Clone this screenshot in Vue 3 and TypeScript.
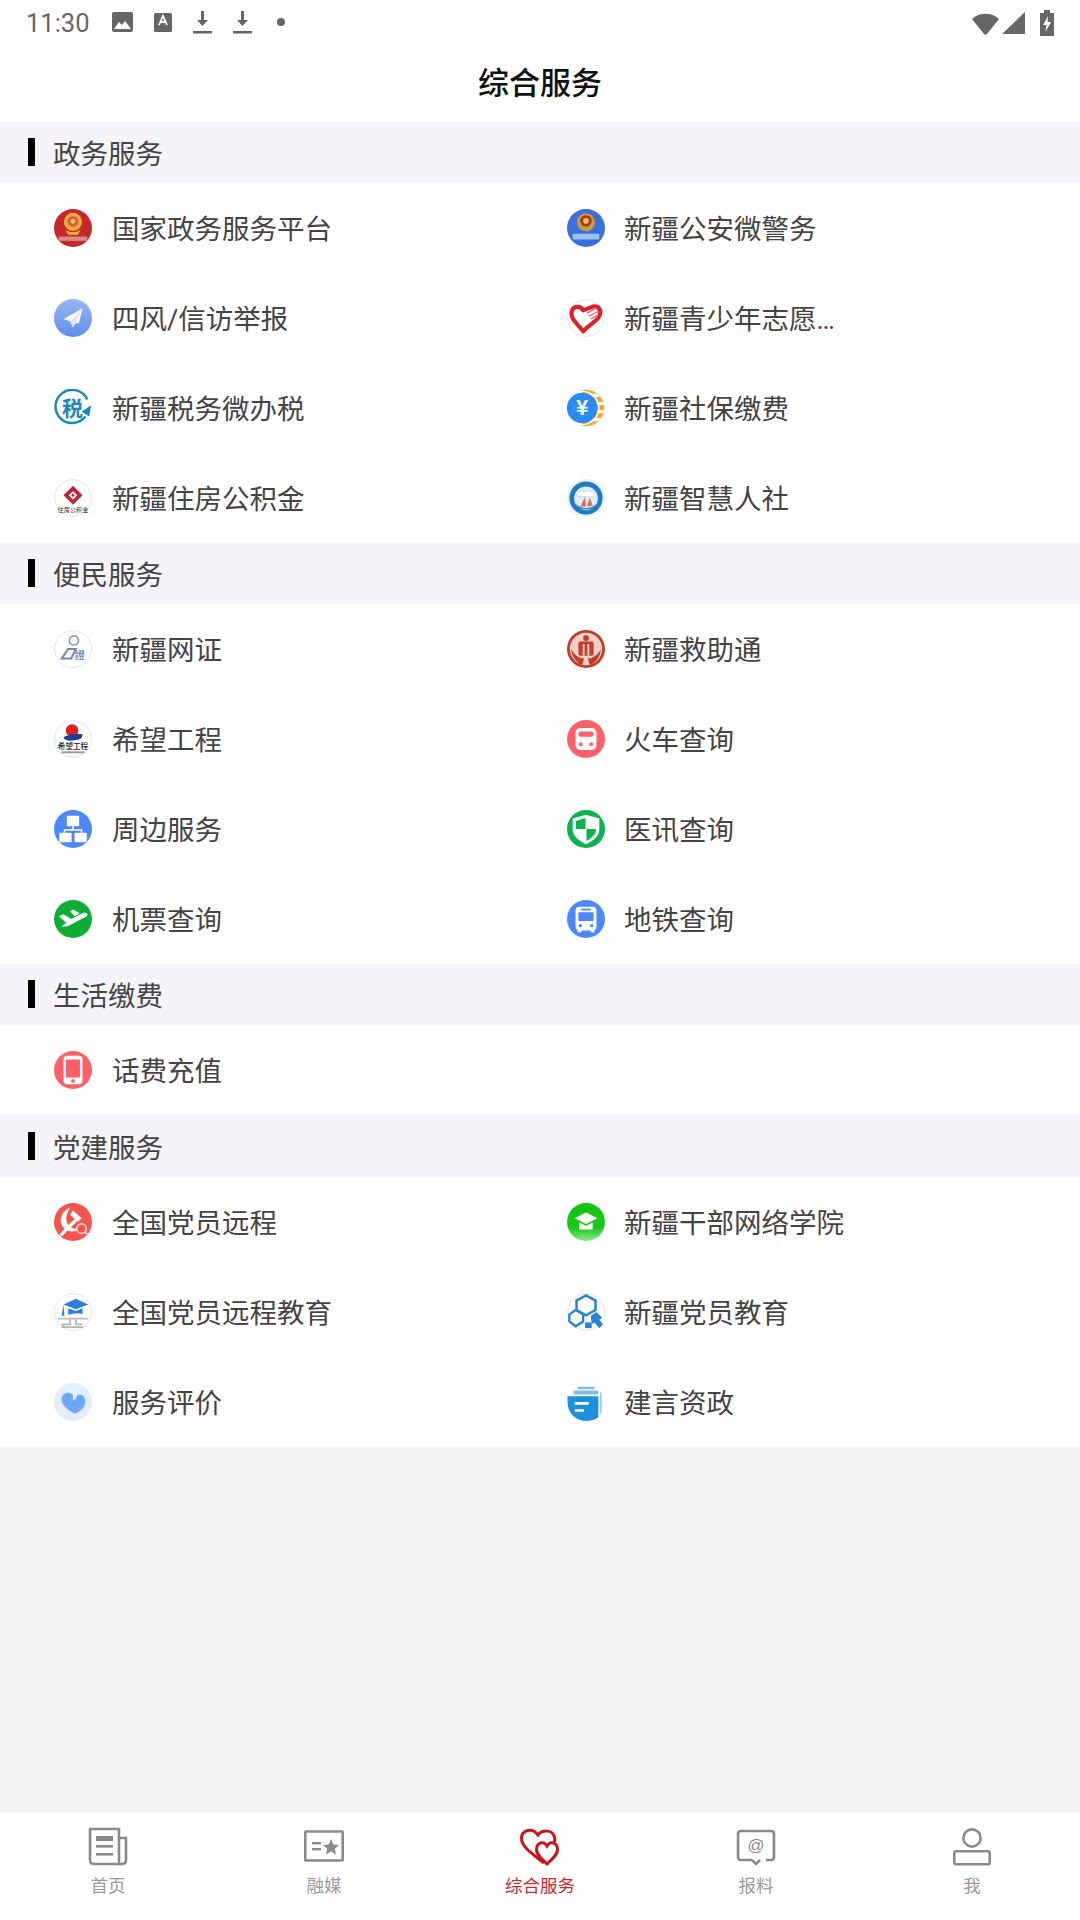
<template>
  <div class="page">
    <div class="status">
      <span class="time">11:30</span>
      <div class="status_left">
        <svg v-for="(s, i) in leftStatus" :key="i" :width="s.w" height="24" :viewBox="`0 0 ${s.w} 24`" v-html="s.body"></svg>
      </div>
      <div class="status_right">
        <svg width="27" height="24" viewBox="0 0 27 24"><path d="M0 8C7 1 20 1 27 8L15 23C14 24 13 24 12 23Z" fill="#666" /></svg>
        <svg width="24" height="24" viewBox="0 0 24 24"><path d="M0 23L23 1V23Z" fill="#666" /></svg>
        <svg width="16" height="26" viewBox="0 0 16 26"><path d="M5 0H11V3H15V26H1V3H5Z" fill="#666" /><path d="M9 6L4 15H7.5L6.5 22L12 12H8.5Z" fill="#fff" /></svg>
      </div>
    </div>
    <header class="title"><span>综合服务</span></header>

    <main class="content">
      <section v-for="group in groups" :key="group.name">
        <h2 class="group_name"><i class="group_mark"></i><span>{{ group.name }}</span></h2>
        <ul class="grid">
          <li v-for="item in group.items" :key="item.label" class="cell">
            <svg class="cell_icon" viewBox="0 0 40 40" v-html="icons[item.icon]"></svg>
            <span class="cell_label">{{ item.label }}</span>
          </li>
        </ul>
      </section>
    </main>

    <nav class="tabs">
      <div v-for="tab in tabs" :key="tab.label" class="tab" :class="{ active: tab.active }">
        <svg class="tab_icon" viewBox="0 0 40 40" v-html="tab.body"></svg>
        <span>{{ tab.label }}</span>
      </div>
    </nav>
  </div>
</template>

<script setup lang="ts">
const leftStatus = [
  { w: 21, body: '<rect y="1" width="21" height="20" rx="2" fill="#666"/><path d="M2 18L7 11L10 14L13 10L19 18Z" fill="#fff"/>' },
  { w: 18, body: '<rect y="2" width="18" height="19" rx="1.5" fill="#666"/><path d="M5 14L9 5L13 14M6.5 11H11.5" stroke="#fff" stroke-width="1.8" fill="none"/>' },
  { w: 19, body: '<path d="M8 0H11V9H15L9.5 15L4 9H8Z" fill="#666"/><rect y="20" width="19" height="2.5" fill="#666"/>' },
  { w: 19, body: '<path d="M8 0H11V9H15L9.5 15L4 9H8Z" fill="#666"/><rect y="20" width="19" height="2.5" fill="#666"/>' },
  { w: 8, body: '<circle cx="4" cy="11" r="4" fill="#666"/>' },
];

const ring = '<circle cx="20" cy="20" r="19.3" fill="#fff" stroke="#e2e2e8" stroke-width="1"/>';
const label = (x: number, y: number, size: number, fill: string, text: string, weight = 400) =>
  `<text x="${x}" y="${y}" font-size="${size}" font-weight="${weight}" fill="${fill}" text-anchor="middle" font-family="Noto Sans CJK SC, sans-serif">${text}</text>`;

const icons: Record<string, string> = {
  gov: `<circle cx="20" cy="20" r="20" fill="#c4282d"/><circle cx="20" cy="13.5" r="8.5" fill="#e8a33a" stroke="#f5b52e" stroke-width="2"/><circle cx="20" cy="13" r="5.5" fill="#d9544a"/><circle cx="20" cy="13" r="2.6" fill="#f7cf55"/><path d="M12 22Q20 27 28 22L25 27H15Z" fill="#f5b52e"/><rect x="5" y="29" width="30" height="4.5" fill="#dd8a80"/>`,
  police: `<circle cx="20" cy="20" r="20" fill="#3c6fd9"/><circle cx="20" cy="14" r="9.5" fill="#c99a3c"/><circle cx="20" cy="12.5" r="6" fill="#a8352c"/><circle cx="20" cy="12.5" r="3" fill="#e6c35a"/><rect x="6" y="26" width="28" height="6" rx="1" fill="#9fc0f2"/>`,
  plane: `<defs><linearGradient id="pl" x1="0" y1="0" x2="0" y2="1"><stop offset="0" stop-color="#9bb6f2"/><stop offset="1" stop-color="#5d8fec"/></linearGradient></defs><circle cx="20" cy="20" r="20" fill="url(#pl)"/><path d="M30 10L10 21L17 23.5L20 30L23 25L26 26Z" fill="#fff"/><path d="M30 10L17 23.5L20 30Z" fill="#dfe8fb"/>`,
  heart: `${ring}<path d="M17 34C12 27 3 21 5 13C7 7 14 7 17 12L27 8C33 7 37 12 34 18C31 24 23 27 17 34Z" fill="none" stroke="#d8222b" stroke-width="4.4" stroke-linejoin="round"/><path d="M21 15L31 9M23 18L33 13M25 21L32 17" stroke="#e87078" stroke-width="1.6"/>`,
  tax: `<circle cx="20" cy="20" r="20" fill="#fff"/><path d="M33 29A17.5 17.5 0 1 1 35 11" fill="none" stroke="#1d87b7" stroke-width="2.6"/><path d="M39 17L37 29L29 24Z" fill="#1d87b7"/>${label(19.5, 28, 22, "#1d87b7", "税", 700)}`,
  yuan: `<defs><clipPath id="yc"><circle cx="20" cy="20" r="19"/></clipPath></defs>${ring}<g clip-path="url(#yc)"><path d="M16 2.5H40M22 11H40M26 19.5H40M22 28H40M16 36.5H40" stroke="#f5a623" stroke-width="5.2"/></g><circle cx="16" cy="20" r="16" fill="#2a8bf2"/><circle cx="16" cy="20" r="17.5" fill="none" stroke="#fff" stroke-width="1.4"/>${label(16, 27.5, 22, "#fff", "¥", 700)}`,
  fund: `${ring}<path d="M20 7L30 17L20 27L10 17Z" fill="#b8263a"/><path d="M20 12.5L24.5 17L20 21.5L15.5 17Z" fill="#fff"/><path d="M20 15L22 17L20 19L18 17Z" fill="#b8263a"/>${label(20, 35, 6.5, "#333", "住房公积金")}`,
  hrss: `<circle cx="20" cy="20" r="20" fill="#e9f1f7"/><circle cx="20" cy="20" r="17.5" fill="#1f7cc0"/><circle cx="20" cy="20.5" r="12.5" fill="#dfeefa"/><path d="M10 18C11 12 17 12 19 14C22 11 29 13 30 19Z" fill="#fff" stroke="#a9cbe6" stroke-width="0.6"/><path d="M14 29L19 19L20 29ZM21 29L24 20L27 28Z" fill="#e0694a"/><path d="M9 26Q20 35 31 26L27 32H13Z" fill="#3a8dc9"/>`,
  netid: `${ring}<circle cx="21" cy="11" r="4.8" fill="none" stroke="#8e98bc" stroke-width="1.8"/><path d="M8 30L15 20H23L18 30Z" fill="none" stroke="#7a86b4" stroke-width="2.2"/>${label(27, 30, 11, "#6c78a8", "證", 500)}`,
  aid: `<circle cx="20" cy="20" r="20" fill="#c33d2b"/><circle cx="20" cy="20" r="17" fill="#f0cfc7"/><circle cx="20" cy="8.5" r="3" fill="#c33d2b"/><rect x="12" y="12" width="16" height="15" rx="2" fill="#c33d2b"/><rect x="16.5" y="15" width="2" height="12" fill="#f0cfc7"/><rect x="21.5" y="15" width="2" height="12" fill="#f0cfc7"/><path d="M4 20Q10 30 18 30L16 37Q6 33 4 20ZM36 20Q30 30 22 30L24 37Q34 33 36 20Z" fill="#c33d2b"/>`,
  hope: `${ring}<circle cx="19" cy="11" r="6.6" fill="#de1f26"/><path d="M10 18Q20 13 30 15Q30 21 23 21Q15 23 11 20Z" fill="#1f3f92"/>${label(20, 30, 8, "#222", "希望工程", 500)}<rect x="8" y="33" width="24" height="2" fill="#999"/>`,
  train: `<circle cx="20" cy="20" r="20" fill="#fb6167"/><rect x="9" y="8.5" width="22" height="23" rx="5" fill="#fff"/><rect x="12" y="12" width="16" height="5.5" rx="2.5" fill="#fb6167"/><circle cx="14.5" cy="25.5" r="2" fill="#fb6167"/><circle cx="25.5" cy="25.5" r="2" fill="#fb6167"/>`,
  nearby: `<circle cx="20" cy="20" r="20" fill="#4c88f7"/><rect x="13.5" y="6" width="13" height="11" rx="1" fill="#fff"/><rect x="5.5" y="24" width="13" height="10" rx="1" fill="#fff"/><rect x="21.5" y="24" width="13" height="10" rx="1" fill="#fff"/><path d="M20 17V21M11 24V21H29V24" stroke="#fff" stroke-width="1.6" fill="none"/>`,
  shield: `<circle cx="20" cy="20" r="20" fill="#0db14e"/><path d="M20 5L34 9V21C34 27 27 33 20 36C13 33 6 27 6 21V9Z" fill="#fff"/><path d="M19.5 8.5L9.5 11.5V20H19.5ZM20.5 20H30.5V21C30.5 26 25 30 20.5 32.5Z" fill="#0db14e"/>`,
  flight: `<circle cx="20" cy="20" r="20" fill="#10ad36"/><path d="M5 17L10 15L18 20L30 14C35 12 37 16 33 18L14 28L8 28L13 24L5 17Z" fill="#fff"/><path d="M17 12L20 10L27 14L22 17Z" fill="#fff"/>`,
  metro: `<circle cx="20" cy="20" r="20" fill="#4c88f7"/><rect x="9" y="7" width="22" height="25" rx="4" fill="#fff"/><rect x="12" y="13" width="16" height="9" rx="1" fill="#4c88f7"/><rect x="15" y="9" width="10" height="2" fill="#4c88f7"/><circle cx="14" cy="27" r="1.8" fill="#4c88f7"/><circle cx="26" cy="27" r="1.8" fill="#4c88f7"/><rect x="11" y="31" width="4" height="3" fill="#fff"/><rect x="25" y="31" width="4" height="3" fill="#fff"/>`,
  phone: `<circle cx="20" cy="20" r="20" fill="#fb6167"/><rect x="10" y="5" width="20" height="30" rx="4" fill="#fff"/><rect x="12.5" y="9" width="15" height="19" rx="1" fill="#fb6167"/><circle cx="20" cy="31.5" r="2" fill="#fb6167"/>`,
  party: `<circle cx="20" cy="20" r="20" fill="#f4564e"/><path d="M17 5C8 8 4 19 10 26C15 31 23 31 27 27C20 28 15 25 13.5 20C12 15 14 10 17 5Z" fill="#fff"/><path d="M20 8L29 16L25 20L17 12Z" fill="#fff"/><path d="M8 33L22 19" stroke="#fff" stroke-width="3.6" stroke-linecap="round"/><circle cx="29" cy="27" r="5" fill="#f4564e" stroke="#fbd5d2" stroke-width="1.8"/><path d="M33 31L37 35" stroke="#fbd5d2" stroke-width="1.8"/>`,
  monitor: `${ring}<path d="M6 4H34V26H6Z" fill="#fff"/><path d="M4 27H36" stroke="#bbb" stroke-width="1.8"/><path d="M17 28V33H9V36H31M23 28V33H30" fill="none" stroke="#b5b5b5" stroke-width="1.8"/><path d="M10 12L23 6L36 12L23 17Z" fill="#2a7fe0"/><path d="M15 16V23Q23 20 30 22V16L23 19Z" fill="#2a7fe0"/><path d="M10 12L8 24H11Z" fill="#2a7fe0"/>`,
  college: `<defs><linearGradient id="cg" x1="0" y1="0" x2="0" y2="1"><stop offset="0" stop-color="#12c30f"/><stop offset="0.65" stop-color="#1bc71a"/><stop offset="1" stop-color="#8ee98a"/></linearGradient></defs><circle cx="20" cy="20" r="20" fill="url(#cg)"/><path d="M8 16L20 10L32 16L20 22Z" fill="#fff"/><path d="M13 20.5L20 24L27 20.5V28H13Z" fill="#fff"/>`,
  review: `<circle cx="20" cy="20" r="20" fill="#e2eefe"/><path d="M20 13C17 8 8 10 8 17C8 25 18 30 22 32C29 30 33 25 33 19C33 13 26 10 24 14L20 19Z" fill="#6ea7f6"/><path d="M20 13L23 17" stroke="#e2eefe" stroke-width="1.2"/>`,
  hex: `${ring}<path d="M20 2.5L30 8V18L20 23.5L10 18V8Z" fill="none" stroke="#2a83d1" stroke-width="2.6"/><path d="M9 18L17 22.5V30L9 35L2.5 30V22.5Z" fill="none" stroke="#2a83d1" stroke-width="2.4"/><path d="M25 24L31 20L37 26L34 28.5L38 33L34 37L29 31L26 33Z" fill="#2a83d1"/><rect x="19" y="31" width="7" height="6" fill="#2a83d1"/>`,
  advice: `<circle cx="20" cy="20" r="20" fill="#fff"/><path d="M11 4H29V6.5H11ZM7 8H33V12H7Z" fill="#7fbdec"/><path d="M35.5 10V32" stroke="#9ccaee" stroke-width="2"/><path d="M0.5 14H33V36Q27 40 20 40C9 40 0.5 31 0.5 20Z" fill="#1d90dc"/><rect x="8" y="20" width="15" height="2.8" rx="1" fill="#fff"/><rect x="8" y="27.5" width="10" height="2.8" rx="1" fill="#fff"/>`,
};

const groups = [
  {
    name: "政务服务",
    items: [
      { label: "国家政务服务平台", icon: "gov" },
      { label: "新疆公安微警务", icon: "police" },
      { label: "四风/信访举报", icon: "plane" },
      { label: "新疆青少年志愿…", icon: "heart" },
      { label: "新疆税务微办税", icon: "tax" },
      { label: "新疆社保缴费", icon: "yuan" },
      { label: "新疆住房公积金", icon: "fund" },
      { label: "新疆智慧人社", icon: "hrss" },
    ],
  },
  {
    name: "便民服务",
    items: [
      { label: "新疆网证", icon: "netid" },
      { label: "新疆救助通", icon: "aid" },
      { label: "希望工程", icon: "hope" },
      { label: "火车查询", icon: "train" },
      { label: "周边服务", icon: "nearby" },
      { label: "医讯查询", icon: "shield" },
      { label: "机票查询", icon: "flight" },
      { label: "地铁查询", icon: "metro" },
    ],
  },
  {
    name: "生活缴费",
    items: [{ label: "话费充值", icon: "phone" }],
  },
  {
    name: "党建服务",
    items: [
      { label: "全国党员远程", icon: "party" },
      { label: "新疆干部网络学院", icon: "college" },
      { label: "全国党员远程教育", icon: "monitor" },
      { label: "新疆党员教育", icon: "hex" },
      { label: "服务评价", icon: "review" },
      { label: "建言资政", icon: "advice" },
    ],
  },
];

const gray = "#8a8a8a";
const tabs = [
  {
    label: "首页",
    active: false,
    body: `<path d="M2 2H31V37H6Q2 37 2 33Z" fill="none" stroke="${gray}" stroke-width="2.6"/><path d="M31 11H38V33Q38 37 34 37H30" fill="none" stroke="${gray}" stroke-width="2.6"/><rect x="8" y="9" width="17" height="5" fill="${gray}"/><rect x="8" y="18" width="17" height="2.6" fill="${gray}"/><rect x="8" y="26" width="17" height="2.6" fill="${gray}"/>`,
  },
  {
    label: "融媒",
    active: false,
    body: `<rect x="1.3" y="4.5" width="37.4" height="29" rx="1" fill="none" stroke="${gray}" stroke-width="2.6"/><rect x="8" y="15" width="9" height="2.4" fill="${gray}"/><rect x="8" y="21" width="9" height="2.4" fill="${gray}"/><path d="M27 12L29.4 17.4L35 18L30.8 21.8L32 27.5L27 24.6L22 27.5L23.2 21.8L19 18L24.6 17.4Z" fill="${gray}"/>`,
  },
  {
    label: "综合服务",
    active: true,
    body: `<path d="M24 36C14 28 1 20 1.5 11C2 3 12 0 18 8C22 3 32 2 34.5 10C35 12 35 13 34.5 15" fill="none" stroke="#c4161c" stroke-width="3"/><path d="M27 37C22 32 16 28 16.5 22C17 15 24 14 27 19C30 14 37 15 37.5 22C38 28 32 32 27 37Z" fill="none" stroke="#c4161c" stroke-width="3"/>`,
  },
  {
    label: "报料",
    active: false,
    body: `<path d="M16 33H5Q2 33 2 30V7Q2 4 5 4H35Q38 4 38 7V30Q38 33 35 33H30" fill="none" stroke="${gray}" stroke-width="2.6"/><path d="M16 33L20 37L24 33" fill="none" stroke="${gray}" stroke-width="2.6"/><text x="20" y="24" font-size="17" fill="${gray}" text-anchor="middle" font-family="Liberation Sans, sans-serif">@</text>`,
  },
  {
    label: "我",
    active: false,
    body: `<circle cx="20" cy="11" r="8.6" fill="none" stroke="${gray}" stroke-width="2.6"/><rect x="2.3" y="24.3" width="35.4" height="13" rx="1.5" fill="none" stroke="${gray}" stroke-width="2.6"/>`,
  },
];
</script>

<style>
html,
body {
  margin: 0;
  background: #f4f4f4;
}
</style>

<style scoped>
* {
  margin: 0;
  padding: 0;
  box-sizing: border-box;
  list-style: none;
}

.page {
  width: 1080px;
  height: 1920px;
  display: flex;
  flex-direction: column;
  background: #f4f4f4;
  font-family: "Noto Sans CJK SC", "Noto Sans", sans-serif;
}

.status {
  height: 46px;
  padding: 0 25px 0 26px;
  display: flex;
  align-items: center;
  background: #fff;
}

.time {
  font-family: Roboto, sans-serif;
  font-size: 25.5px;
  color: #666;
}

.status_left {
  display: flex;
  align-items: center;
  gap: 21px;
  margin-left: 22px;
}

.status_left svg:last-child {
  margin-left: 4px;
}

.status_right {
  display: flex;
  align-items: center;
  gap: 3px;
  margin-left: auto;
}

.status_right svg:last-child {
  margin-left: 10px;
}

.title {
  height: 75.5px;
  padding-bottom: 7px;
  display: flex;
  align-items: center;
  justify-content: center;
  background: #fff;
  font-size: 31px;
  font-weight: 500;
  color: #111;
}

.content {
  flex: 1;
}

.group_name {
  height: 61.3px;
  padding: 0 0 1px 28px;
  display: flex;
  align-items: center;
  background: #f5f5f9;
  font-size: 27.5px;
  font-weight: 400;
  color: #444;
}

.group_mark {
  width: 7px;
  height: 28px;
  margin-right: 18px;
  background: #000;
}

.grid {
  display: grid;
  grid-template-columns: 1fr 1fr;
  padding: 0 27px;
  background: #fff;
}

.cell {
  height: 90px;
  padding-left: 27px;
  display: flex;
  align-items: center;
}

.cell:nth-child(even) .cell_label {
  margin-left: 19px;
}

.cell_icon {
  width: 38px;
  height: 38px;
  flex: none;
}

.cell_label {
  margin-left: 20px;
  padding-bottom: 2px;
  font-family: Roboto, "Noto Sans CJK SC", sans-serif;
  font-size: 27.5px;
  color: #444;
  white-space: nowrap;
}

.tabs {
  height: 107px;
  display: grid;
  grid-template-columns: repeat(5, 1fr);
  background: #fff;
}

.tab {
  padding-top: 14px;
  display: flex;
  flex-direction: column;
  align-items: center;
  font-size: 17.5px;
  line-height: 24px;
  color: #9a9a9a;
}

.tab.active {
  color: #c9282d;
}

.tab_icon {
  width: 40px;
  height: 40px;
  margin-bottom: 6px;
}
</style>
